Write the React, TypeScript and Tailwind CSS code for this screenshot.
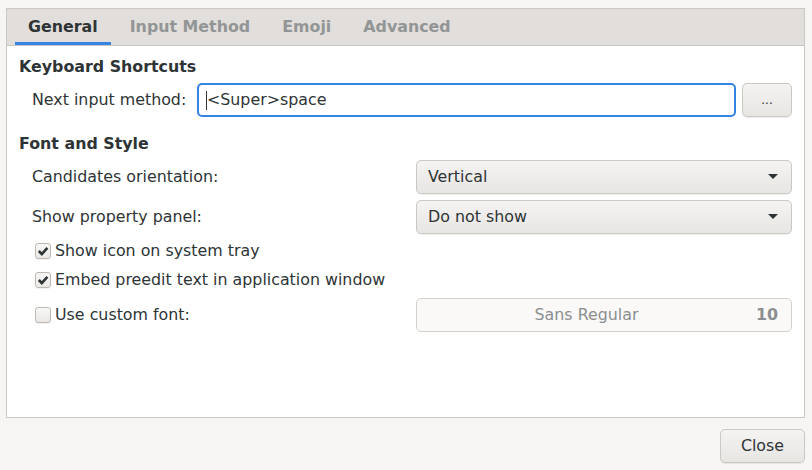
import React from 'react';

const font = { fontFamily: '"DejaVu Sans", "Noto Sans", sans-serif' };

const Check: React.FC<{ checked?: boolean; label: string }> = ({ checked, label }) => (
  <label className="flex items-center gap-[4px] pl-[3px]">
    <span className="w-[16px] h-[16px] rounded-[3px] border border-[#bfb8b1] bg-gradient-to-b from-[#f7f7f7] to-[#ebe9e7] flex items-center justify-center shadow-[0_1px_0_rgba(0,0,0,0.05)]">
      {checked && (
        <svg width="12" height="12" viewBox="0 0 12 12">
          <path d="M1.8 6 L4.8 9 L10.4 2.8" fill="none" stroke="#2e3436" strokeWidth="2.6" />
        </svg>
      )}
    </span>
    <span>{label}</span>
  </label>
);

const Combo: React.FC<{ value: string }> = ({ value }) => (
  <div className="w-[376px] h-[34px] rounded-[5px] border border-[#cdc7c2] bg-gradient-to-b from-[#f4f3f2] to-[#e8e6e3] flex items-center justify-between pl-[11px] pr-[13px] shadow-[0_1px_1px_rgba(0,0,0,0.07)]">
    <span>{value}</span>
    <svg width="10" height="6" viewBox="0 0 10 6">
      <path d="M0 0 H10 L5 5 Z" fill="#2e3436" />
    </svg>
  </div>
);

const App: React.FC = () => {
  return (
    <div className="w-[812px] h-[470px] bg-[#f6f5f4] text-[#2e3436] text-[15.85px] flex flex-col pt-[8px] pl-[6px] pr-[7px]" style={font}>
      <div className="h-[410px] border border-[#cdc7c2] bg-white flex flex-col">
        <div className="h-[37px] bg-[#e1dedb] border-b border-[#cdc7c2] flex pl-[5px] font-bold">
          <div className="mx-[3px] px-[13px] flex items-center border-b-[3px] border-[#3584e4] pt-[3px]">General</div>
          <div className="mx-[3px] px-[13px] flex items-center text-[#929595]">Input Method</div>
          <div className="mx-[3px] px-[13px] flex items-center text-[#929595]">Emoji</div>
          <div className="mx-[3px] px-[13px] flex items-center text-[#929595]">Advanced</div>
        </div>
        <div className="px-[12px] pt-[11px] flex flex-col">
          <div className="font-bold h-[20px] leading-[20px]">Keyboard Shortcuts</div>
          <div className="flex items-center mt-[6px] h-[34px]">
            <span className="pl-[13px] w-[178px]">Next input method:</span>
            <div className="w-[539px] h-[34px] rounded-[5px] border-2 border-[#3584e4] flex items-center pl-[7px]">
              <span className="w-px h-[19px] bg-[#2e3436]" />
              <span>&lt;Super&gt;space</span>
            </div>
            <div className="ml-[6px] w-[50px] h-[34px] rounded-[5px] border border-[#cdc7c2] bg-gradient-to-b from-[#f4f3f2] to-[#e8e6e3] flex items-center justify-center text-[12px] shadow-[0_1px_1px_rgba(0,0,0,0.07)]">...</div>
          </div>
          <div className="font-bold h-[20px] leading-[20px] mt-[17px]">Font and Style</div>
          <div className="flex items-center mt-[6px] h-[34px] justify-between">
            <span className="pl-[13px]">Candidates orientation:</span>
            <Combo value="Vertical" />
          </div>
          <div className="flex items-center mt-[6px] h-[34px] justify-between">
            <span className="pl-[13px]">Show property panel:</span>
            <Combo value="Do not show" />
          </div>
          <div className="flex flex-col gap-[9px] mt-[7px] pl-[13px]">
            <div className="h-[20px] flex items-center"><Check checked label="Show icon on system tray" /></div>
            <div className="h-[20px] flex items-center"><Check checked label="Embed preedit text in application window" /></div>
          </div>
          <div className="flex items-center mt-[8px] h-[34px] justify-between">
            <div className="pl-[13px]"><Check label="Use custom font:" /></div>
            <div className="w-[376px] h-[34px] rounded-[5px] border border-[#d5d0cc] bg-[#faf9f8] flex items-center pr-[13px]">
              <span className="flex-1 text-center text-[#8b8e8f]">Sans Regular</span>
              <span className="font-bold text-[#8b8e8f]">10</span>
            </div>
          </div>
        </div>
      </div>
      <div className="flex justify-end pt-[11px]">
        <button className="w-[85px] h-[34px] rounded-[5px] border border-[#cdc7c2] bg-gradient-to-b from-[#f4f3f2] to-[#e8e6e3] shadow-[0_1px_1px_rgba(0,0,0,0.07)]">Close</button>
      </div>
    </div>
  );
};

export default App;
